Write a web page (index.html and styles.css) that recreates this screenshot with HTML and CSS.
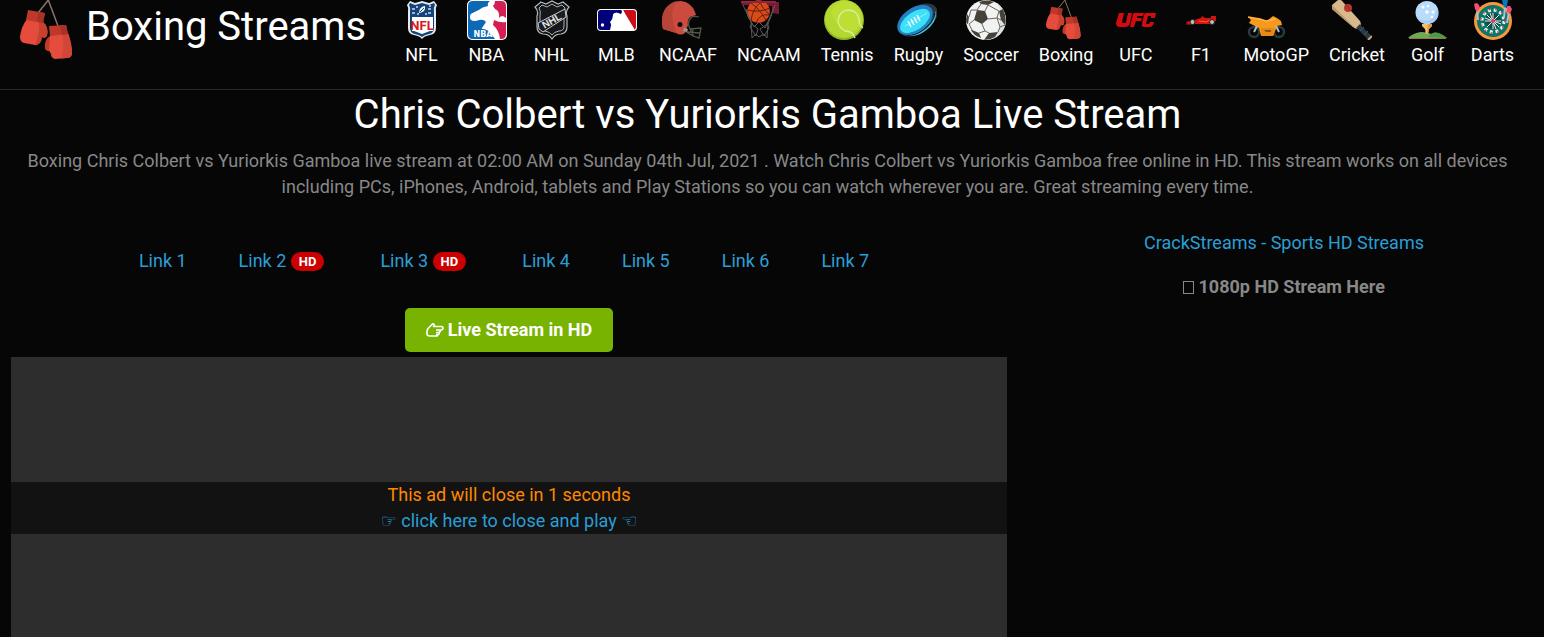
FILE: index.html
```
<!DOCTYPE html>
<html lang="en">
<head>
    <meta charset="UTF-8">
    <meta name="viewport" content="width=device-width, initial-scale=1">
    <title>Chris Colbert vs Yuriorkis Gamboa Live Stream</title>
    <link rel="stylesheet" href="styles.css">
</head>
<body>
    <!-- shared shapes -->
    <svg class="sprite" aria-hidden="true">
        <symbol id="gloves" viewBox="0 0 60 60">
            <path d="M18 13L28.300 0L38 26" fill="none" stroke="#8d7468" stroke-width="1.500"/>
            <path d="M7 19L23 22Q29 27 27 36Q25 39 22 37Q21 45 15 45L4 43Q0 42 0 37Q1 27 7 19Z" fill="#e64c3c"/>
            <path d="M19 21L23 22Q29 27 27 36Q25 39 22 37Q21 45 15 45Q20 34 19 21Z" fill="#c8402f"/>
            <path d="M8 10L25 13L23 23L6 20Z" fill="#bf392b"/>
            <path d="M18 12L25 13L23 23L17 22Z" fill="#a83226"/>
            <path d="M30 36Q24 39 25 49Q27 52 31 51Z" fill="#c0392b"/>
            <path d="M30 35L48 33Q52 44 52 54Q51 58 47 58L35 59Q31 58 31 54L29 50Z" fill="#e64c3c"/>
            <path d="M42 34L48 33Q52 44 52 54Q51 58 47 58L41 58.500Q45 49 42 34Z" fill="#d14636"/>
            <path d="M29 26L46 25L48 34L30 36Z" fill="#bf392b"/>
            <path d="M40 25L46 25L48 34L42 35Z" fill="#a83226"/>
        </symbol>
    </svg>

    <header class="header">
        <a class="brand" href="#">
            <svg class="brand-logo" aria-hidden="true"><use href="#gloves"/></svg>
            <span>Boxing Streams</span>
        </a>
        <nav class="menu">
            <a href="#">
                <svg viewBox="0 0 40 40" aria-hidden="true">
                    <path d="M8 1L13 3L20 1L27 3L32 1L35 5Q33 8 34 12V28Q34 34 28 35Q22 36 20 39Q18 36 12 35Q6 34 6 28V12Q7 8 5 5Z" fill="#e4eaf0"/>
                    <path d="M8 3L13 5L20 3L27 5L32 3L33 5Q31 8 32 12V28Q32 33 27 34Q22 35 20 37Q18 35 13 34Q8 33 8 28V12Q9 8 7 5Z" fill="#12437c"/>
                    <path d="M10 9h3M10 13h3M15 14h2M26 9h3M26 13h3M23 14h2M14 7h2M27 6h2" stroke="#cad8e8" stroke-width="1.500"/>
                    <path d="M17 13Q17 7 23 6Q24 12 17 13Z" fill="#fff"/>
                    <path d="M18 12L22 8" stroke="#12437c"/>
                    <path d="M10 17H31V31H28L20 34L12 31H10Z" fill="#fff"/>
                    <text x="20" y="30" text-anchor="middle" class="mark mark-nfl">NFL</text>
                </svg>
                <span>NFL</span>
            </a>
            <a href="#">
                <svg viewBox="0 0 40 40" aria-hidden="true">
                    <rect width="40" height="40" rx="5" fill="#fff"/>
                    <path d="M6 1H23Q20 3 21 6Q15 7 12 10L4 14Q2 17 4 20Q7 22 12 20Q17 19 19 22L15 28L14 31H1V6Q1 1 6 1Z" fill="#0d69b5"/>
                    <path d="M4 14L12 10L17 8L15 16L11 18L5 20Q2 18 4 14Z" fill="#fff"/>
                    <path d="M1 29H17L22 31L28 39H6Q1 39 1 34Z" fill="#0d69b5"/>
                    <path d="M28 1H34Q39 1 39 6V18L36 16Q33 16 32 18Q33 11 28 9L26 6Q28 4 28 1Z" fill="#d51f52"/>
                    <path d="M39 22V34Q39 39 34 39H33Q32 30 26 25L27 20Q33 23 39 22Z" fill="#d51f52"/>
                    <text x="16" y="37" text-anchor="middle" class="mark mark-nba">NBA</text>
                </svg>
                <span>NBA</span>
            </a>
            <a href="#">
                <svg viewBox="0 0 40 40" aria-hidden="true">
                    <path d="M9 2L14 4L20 1L26 4L31 2L37 7Q33 11 35 16V27Q35 33 29 34Q23 34 20 39Q17 34 11 34Q5 33 5 27V16Q7 11 3 7Z" fill="#101113" stroke="#b5babd" stroke-width="1.200"/>
                    <path d="M10 5L15 7L20 4L25 7L30 5L33 8Q31 11 32 16V26Q32 31 27 31Q22 32 20 35Q18 32 13 31Q8 31 8 26V16Q9 11 7 8Z" fill="#15171a" stroke="#aeb4b8"/>
                    <path d="M6 23L33 9L34 17L11 32L7 29Z" fill="#1b1e21" stroke="#c6cbce"/>
                    <text x="20" y="24" text-anchor="middle" transform="rotate(-30 20 21)" class="mark mark-nhl">NHL</text>
                </svg>
                <span>NHL</span>
            </a>
            <a href="#">
                <svg viewBox="0 0 40 40" aria-hidden="true">
                    <rect y="9" width="40" height="22" rx="4" fill="#fff"/>
                    <path d="M4 10H26L24 14L21 13Q15 12 16 18L13 22Q15 25 14 30H4Q1 30 1 27V13Q1 10 4 10Z" fill="#00007b"/>
                    <path d="M26 10H36Q39 10 39 13V27Q39 29 37 30Q30 20 26 10Z" fill="#cc0c16"/>
                    <path d="M16 15Q17 12 21 13L23 15H26V16L23 17Q23 20 27 20L31 24L29 30H13L15 21Z" fill="#fff"/>
                    <path d="M25 10L37 30" stroke="#fff" stroke-width="1.500"/>
                    <circle cx="5.500" cy="25" r="1.700" fill="#fff"/>
                </svg>
                <span>MLB</span>
            </a>
            <a href="#">
                <svg viewBox="0 0 40 40" aria-hidden="true">
                    <path d="M1 29Q-2 16 4 8Q10 1 19 1Q29 2 33 12L34 15L28 17Q25 20 26 25L23 33Q19 36 14 33Z" fill="#cb4b3e"/>
                    <path d="M1 29Q-2 16 4 8Q9 2 15 1Q8 10 11 22L14 33Z" fill="#b74437"/>
                    <circle cx="18" cy="24.500" r="2.500" fill="#101010"/>
                    <path d="M37 17Q30 15 28 19Q25 23 28 29L39 28L37 38L29 35L23 31M28 29L32 37M25 32L38 33M31 29L30 35" fill="none" stroke="#55554b" stroke-width="1.300"/>
                    <path d="M22 28l4 1-1 3-4-1z" fill="#9a9a94"/>
                </svg>
                <span>NCAAF</span>
            </a>
            <a href="#">
                <svg viewBox="0 0 40 40" aria-hidden="true">
                    <path d="M1 2L39 2V14L32 13V6L2 5Z" fill="#771b35"/>
                    <circle cx="18.500" cy="11.500" r="11.300" fill="#dc4a18"/>
                    <path d="M11 3Q19 8 26 20M22 1Q13 8 11 20M7 10Q19 13 30 8M16 23Q20 13 29 15M20 1Q22 9 29 14" fill="none" stroke="#5c2112"/>
                    <path d="M1 2H36" stroke="#94213d" stroke-width="2"/>
                    <path d="M3 5L11 22L12 38L16 34L19 37L24 34L27 38L28 24L35 5M8 16L14 27L19 22L25 28L31 15M12 23L10 27L16 36L18 29L13 25M27 23L29 28L24 36L20 29L26 25M6 9L9 19M33 9L30 19" fill="none" stroke="#5b5b5b"/>
                </svg>
                <span>NCAAM</span>
            </a>
            <a href="#">
                <svg viewBox="0 0 40 40" aria-hidden="true">
                    <circle cx="20" cy="20" r="20" fill="#94b51e"/>
                    <circle cx="20" cy="19" r="19" fill="#b4d832"/>
                    <path d="M7 13Q9 4 19 1Q31 1 37 13Q40 25 29 31Q15 33 7 13Z" fill="#bddf35"/>
                    <path d="M31 38Q29 31 21 31Q14 27 14 20Q16 10 25 10Q34 11 35 20Q35 25 39 28" fill="none" stroke="#dced9c" stroke-width="1.300"/>
                </svg>
                <span>Tennis</span>
            </a>
            <a href="#">
                <svg viewBox="0 0 40 40" aria-hidden="true">
                    <ellipse cx="21" cy="20" rx="22" ry="13" transform="rotate(-35 21 20)" fill="#303640"/>
                    <path d="M39 11Q40 23 28 31Q19 38 8 35Q31 30 39 11Z" fill="#38d5f4"/>
                    <path d="M38 13Q36 23 26 30Q18 36 9 35" fill="none" stroke="#182536" stroke-width="1.500"/>
                    <ellipse cx="18" cy="20" rx="20" ry="12" transform="rotate(-35 18 20)" fill="#2182c4"/>
                    <ellipse cx="18" cy="21" rx="17" ry="9" transform="rotate(-35 18 21)" fill="#3de0fa"/>
                    <path d="M8 26L30 13" stroke="#9ceefb"/>
                    <path d="M11 21L14 27M14 19L17 25M17 17L20 23M20 15L23 21" stroke="#fff" stroke-width="1.500"/>
                </svg>
                <span>Rugby</span>
            </a>
            <a href="#">
                <svg viewBox="0 0 40 40" aria-hidden="true">
                    <circle cx="20" cy="20" r="20" fill="#f1f2f2"/>
                    <path d="M29 2Q36 7 34 20Q34 33 25 39Q39 34 40 20Q39 7 29 2Z" fill="#dce0e1"/>
                    <path d="M11 10L19 11L22 19L16 24L8 20Z" fill="#464239"/>
                    <path d="M13 2Q20 -1 28 2L22 5L15 4ZM33 11L37 9Q41 18 39 25L35 20ZM23 33L32 32L29 37Q24 40 18 40ZM1 14L3 17L2 24Q0 23 0 20ZM6 30L13 33L15 38Q7 35 5 30Z" fill="#464239"/>
                    <path d="M15 4L11 10M22 5L19 11M22 5L33 11M22 19L31 18L35 20M31 18L33 11M16 24L19 31L23 33M8 20L3 24L6 30M19 31L13 33M31 18L34 27L32 32M34 27L39 25M11 10L5 10L3 17" fill="none" stroke="#6b675f"/>
                </svg>
                <span>Soccer</span>
            </a>
            <a href="#">
                <svg viewBox="-4 0 40 40" aria-hidden="true"><use href="#gloves" width="40" height="40"/></svg>
                <span>Boxing</span>
            </a>
            <a href="#">
                <svg viewBox="0 0 40 40" aria-hidden="true">
                    <path d="M3 13H8L6 22Q6 23 7 23H9Q10 23 10 22L12 13H16L14 23Q13 27 9 27H4Q0 27 0 23Z" fill="#d30b0e"/>
                    <path d="M18 13H28L27 16H21V18H26L25 21H20L18 27H14L17 14ZM30 13H40L39 18H35V16H32L30 24H33L34 22H38L37 25Q36 27 34 27H28Q25 27 26 24L28 15Q28 13 30 13Z" fill="#d30b0e"/>
                </svg>
                <span>UFC</span>
            </a>
            <a href="#">
                <svg viewBox="0 0 40 40" aria-hidden="true">
                    <path d="M5 22L13 20L20 18L21 16L24 18L30 18V16H35V21L32 22V24H7Z" fill="#d5120d"/>
                    <path d="M18 21L25 22L29 20" stroke="#ef6522" fill="none"/>
                    <circle cx="11.500" cy="22" r="2.500" fill="#bcbcbc" stroke="#222"/>
                    <circle cx="31" cy="22" r="2.500" fill="#bcbcbc" stroke="#222"/>
                    <path d="M5 24H10" stroke="#d5120d"/>
                </svg>
                <span>F1</span>
            </a>
            <a href="#">
                <svg viewBox="0 0 40 40" aria-hidden="true">
                    <circle cx="8" cy="32" r="5" fill="none" stroke="#283941" stroke-width="2.500"/>
                    <circle cx="33" cy="32" r="5" fill="none" stroke="#283941" stroke-width="2.500"/>
                    <path d="M2 17L14 19L21 21L27 16L31 18L35 21L36 25L31 26L27 36H15L13 28L3 23L5 20Z" fill="#f69a1e"/>
                    <path d="M15 28H30L27 36H15Z" fill="#e98813"/>
                    <path d="M18 30H25V32H20Z" fill="#80581e"/>
                    <path d="M2 17L14 19L20 21L29 19" fill="none" stroke="#ffb63e" stroke-width="1.500"/>
                    <path d="M8 32L11 26M33 32L30 26" fill="none" stroke="#aebcc2" stroke-width="2"/>
                </svg>
                <span>MotoGP</span>
            </a>
            <a href="#">
                <svg viewBox="0 0 40 40" aria-hidden="true">
                    <path d="M0 5L6 0Q9 -1 11 2L28 21Q30 25 27 28Q24 30 21 27L0 9Z" fill="#d7b98b"/>
                    <path d="M0 5L22 27L21 27L0 9Z" fill="#b89a70"/>
                    <path d="M26 26L38 38" stroke="#293a43" stroke-width="5"/>
                    <path d="M28 31L32 27M32 35L36 31" stroke="#425863"/>
                    <path d="M36 40L40 36" stroke="#c7a474" stroke-width="2"/>
                    <circle cx="16" cy="8" r="4" fill="#b9382e"/>
                    <path d="M14 5Q17 7 18 11" fill="none" stroke="#8e2b24"/>
                </svg>
                <span>Cricket</span>
            </a>
            <a href="#">
                <svg viewBox="0 0 40 40" aria-hidden="true">
                    <path d="M0 38Q5 33 13 32Q20 32 23 34Q27 31 31 34Q35 35 39 38Z" fill="#6eaa55"/>
                    <path d="M20 37Q25 31 31 33Q36 35 39 38Z" fill="#4f9849"/>
                    <path d="M1 38.500H38" stroke="#9a7044"/>
                    <path d="M14 24H24V26L21 29L20 34H18L17 29L14 26Z" fill="#f8bc66"/>
                    <path d="M20 24H24V26L21 29L20 34H19Z" fill="#e09a43"/>
                    <circle cx="19" cy="12.500" r="11.500" fill="#b9dcfb"/>
                    <path d="M8 16Q13 22 22 20Q28 17 29 8Q33 17 26 22Q18 26 11 20Z" fill="#a3cdf5"/>
                    <g fill="#fff"><circle cx="15" cy="7" r="1.600"/><circle cx="20" cy="6" r="1.300"/><circle cx="19" cy="12" r="1.700"/><circle cx="25" cy="12" r="1.500"/><circle cx="24" cy="17" r="1.300"/></g>
                </svg>
                <span>Golf</span>
            </a>
            <a href="#">
                <svg viewBox="0 0 40 40" aria-hidden="true">
                    <circle cx="20" cy="21" r="19" fill="#fb963a"/>
                    <circle cx="20" cy="21" r="16" fill="#087768"/>
                    <circle cx="20" cy="21" r="11" fill="none" stroke="#edf4ee" stroke-width="3" stroke-dasharray="3 2.800"/>
                    <circle cx="20" cy="21" r="12" fill="none" stroke="#dc3261" stroke-width="1.500" stroke-dasharray="1.500 5"/>
                    <circle cx="20" cy="21" r="8" fill="#124d48"/>
                    <path d="M20 13V29M12 21H28M14 15L26 27M26 15L14 27M17 13L23 29M12 18L28 24" stroke="#e6efeb"/>
                    <circle cx="20" cy="21" r="2" fill="#ec2d62"/>
                    <path d="M4 9L5 20M32 7L31 18M36 12L34 23" stroke="#a9c4d1" stroke-width="2"/>
                    <path d="M1 4L4 3L6 5L7 8L4 12L2 9ZM34 6L37 6L39 9L37 14L34 12Z" fill="#f34b7c"/>
                    <path d="M29 0H35L34 6L32 8L30 5Z" fill="#0876bc"/>
                </svg>
                <span>Darts</span>
            </a>
        </nav>
    </header>

    <div class="intro">
        <h1>Chris Colbert vs Yuriorkis Gamboa Live Stream</h1>
        <p>Boxing Chris Colbert vs Yuriorkis Gamboa live stream at 02:00 AM on Sunday 04th Jul, 2021 . Watch Chris Colbert vs Yuriorkis Gamboa free online in HD. This stream works on all devices including PCs, iPhones, Android, tablets and Play Stations so you can watch wherever you are. Great streaming every time.</p>
    </div>

    <main class="content">
        <section class="stream">
            <ul class="links">
                <li><a href="#">Link 1</a></li>
                <li><a href="#">Link 2</a> <span class="badge">HD</span></li>
                <li><a href="#">Link 3</a> <span class="badge">HD</span></li>
                <li><a href="#">Link 4</a></li>
                <li><a href="#">Link 5</a></li>
                <li><a href="#">Link 6</a></li>
                <li><a href="#">Link 7</a></li>
            </ul>
            <button class="btn" type="button">
                <svg viewBox="0 0 18 16" aria-hidden="true">
                    <path d="M8 2.500Q7 1 5.500 3L2 6.500Q1 8 1 10V12Q1 14 4 14H10Q12 14 12 12.500Q14 12 13 10.500Q15 9.500 14 8H15.500Q17 7.500 17 6Q17 4.500 15.500 4.500H7.500Q9 3.500 8 2.500ZM14 8H10M13 10.500H10M12 12.500H10" fill="none" stroke="#fff" stroke-width="1.600" stroke-linejoin="round"/>
                </svg>
                <span>Live Stream in HD</span>
            </button>
            <div class="player">
                <div class="ad">
                    <p>This ad will close in 1 seconds</p>
                    <a href="#"><span class="hand">☞</span> click here to close and play <span class="hand">☜</span></a>
                </div>
            </div>
        </section>
        <aside class="side">
            <p><a href="#">CrackStreams - Sports HD Streams</a></p>
            <p class="hd"><span class="box"></span> 1080p HD Stream Here</p>
        </aside>
    </main>
</body>
</html>
```

FILE: styles.css
```
*{
    box-sizing: border-box;
    margin: 0;
    padding: 0;
}
body{
    display: flex;
    flex-direction: column;
    min-height: 100vh;
    background-color: #060606;
    color: #888;
    font-family: Roboto, "Liberation Sans", sans-serif;
    font-size: 18px;
    line-height: 26px;
}
a{
    color: #2a9fd6;
    text-decoration: none;
}
ul{
    list-style: none;
}
.sprite{
    display: none;
}

/* header */
.header{
    display: flex;
    justify-content: space-between;
    align-items: flex-start;
    min-height: 90px;
    padding: 0 29px 0 20px;
    border-bottom: 1px solid #282828;
}
.brand{
    display: flex;
    gap: 6px;
    color: #fff;
    font-size: 40px;
    line-height: 54px;
    white-space: nowrap;
}
.brand-logo{
    width: 60px;
    height: 60px;
}
.menu{
    display: flex;
    gap: 20px;
}
.menu a{
    min-width: 45px;
    color: #fff;
    text-align: center;
}
.menu svg{
    display: block;
    width: 40px;
    height: 40px;
    margin: 0 0 2px 3px;
}
.menu span{
    display: block;
}
.mark{
    font-family: "Liberation Sans", sans-serif;
    font-weight: bold;
}
.mark-nfl{
    font-family: Roboto, sans-serif;
    font-size: 13px;
    fill: #d71920;
}
.mark-nba{
    font-family: "DejaVu Sans", sans-serif;
    font-size: 8px;
    fill: #fff;
}
.mark-nhl{
    font-size: 10px;
    fill: #e2e5e7;
}

/* title */
.intro{
    padding: 0 20px 0 11px;
    text-align: center;
}
.intro h1{
    margin-bottom: 8px;
    color: #fff;
    font-size: 40px;
    font-weight: 400;
    line-height: 50px;
}

/* columns */
.content{
    display: grid;
    grid-template-columns: 2fr 1fr;
    gap: 28px;
    flex: 1;
    padding: 30px 11px 0;
}
.stream{
    display: flex;
    flex-direction: column;
    align-items: center;
    padding-top: 18px;
}
.links{
    display: flex;
    justify-content: center;
    gap: 52px;
    padding-right: 10px;
}
.badge{
    display: inline-block;
    margin-right: 4px;
    padding: 0 8px;
    border-radius: 10px;
    background-color: #c00;
    color: #fff;
    font-size: 13px;
    font-weight: 700;
    line-height: 19px;
    vertical-align: 1px;
}
.btn{
    display: flex;
    align-items: center;
    gap: 4px;
    height: 44px;
    margin: 34px 0 5px;
    padding: 0 21px;
    border: 0;
    border-radius: 5px;
    background-color: #77b300;
    color: #fff;
    font: inherit;
    font-weight: 700;
}
.btn svg{
    width: 18px;
    height: 16px;
}
.player{
    flex: 1;
    align-self: stretch;
    padding-top: 125px;
    background-color: #2d2d2d;
}
.ad{
    background-color: #121212;
    text-align: center;
}
.ad p{
    color: #ff8800;
}
.hand{
    font-family: "DejaVu Sans", sans-serif;
}
.side{
    text-align: center;
}
.side p{
    margin-bottom: 18px;
}
.side .hd{
    font-weight: 700;
}
.box{
    display: inline-block;
    width: 11px;
    height: 13px;
    border: 1px solid #888;
    vertical-align: -1px;
}
```
